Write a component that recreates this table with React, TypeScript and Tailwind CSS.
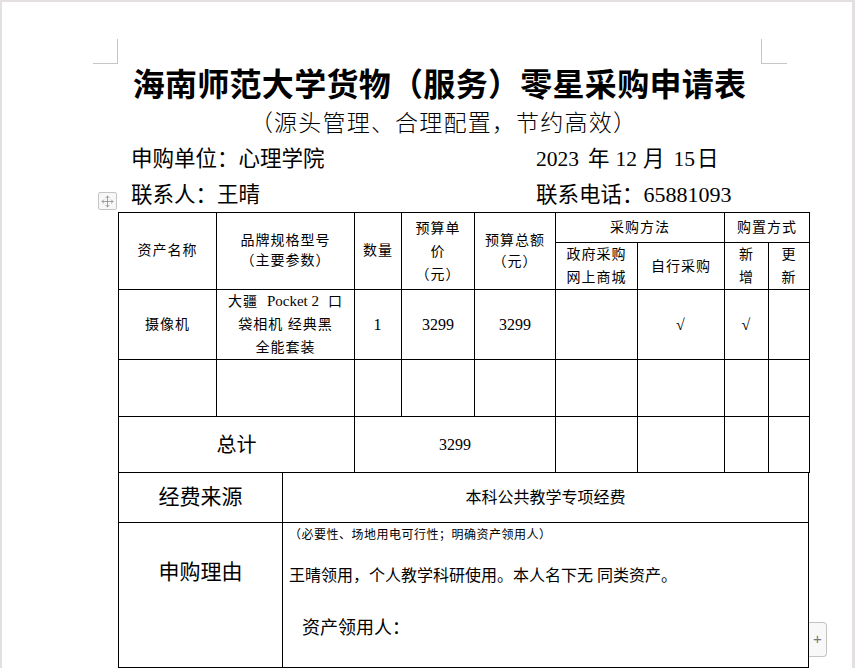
import React from 'react';
import { Move } from 'lucide-react';

const cell = 'border border-black p-0 text-center align-middle';

function CornerMarks() {
  return (
    <div className="flex justify-between pl-[91px] pr-[65px] pt-[37px]">
      <div className="h-[25px] w-[25px] border-b border-r border-[#c6c6c6]" />
      <div className="h-[25px] w-[26px] border-b border-l border-[#c6c6c6]" />
    </div>
  );
}

function PurchaseTable() {
  return (
    <table className="w-[691px] table-fixed border-collapse text-[14px] tracking-[1px]">
      <colgroup>
        <col className="w-[98px]" />
        <col className="w-[138px]" />
        <col className="w-[47px]" />
        <col className="w-[73px]" />
        <col className="w-[81px]" />
        <col className="w-[82px]" />
        <col className="w-[87px]" />
        <col className="w-[44px]" />
        <col className="w-[41px]" />
      </colgroup>
      <tbody>
        <tr className="h-[30px] leading-[20px]">
          <td rowSpan={2} className={cell}>资产名称</td>
          <td rowSpan={2} className={cell}>
            品牌规格型号
            <br />
            （主要参数）
          </td>
          <td rowSpan={2} className={cell}>数量</td>
          <td rowSpan={2} className={`${cell} leading-[23px]`}>
            预算单
            <br />
            价
            <br />
            （元）
          </td>
          <td rowSpan={2} className={`${cell} leading-[21px]`}>
            预算总额
            <br />
            （元）
          </td>
          <td colSpan={2} className={cell}>采购方法</td>
          <td colSpan={2} className={cell}>购置方式</td>
        </tr>
        <tr className="h-[46px] leading-[23px]">
          <td className={cell}>
            政府采购
            <br />
            网上商城
          </td>
          <td className={cell}>自行采购</td>
          <td className={cell}>
            新
            <br />
            增
          </td>
          <td className={cell}>
            更
            <br />
            新
          </td>
        </tr>
        <tr className="h-[70px] leading-[23px]">
          <td className={cell}>摄像机</td>
          <td className={cell}>
            大疆<span className="ml-[9px] text-[15px] tracking-normal">Pocket 2</span>
            <span className="ml-[9px]">口</span>
            <br />
            袋相机 经典黑
            <br />
            全能套装
          </td>
          <td className={`${cell} text-[16px]`}>1</td>
          <td className={`${cell} text-[16px] tracking-normal`}>3299</td>
          <td className={`${cell} text-[16px] tracking-normal`}>3299</td>
          <td className={cell} />
          <td className={`${cell} text-[16px]`}>√</td>
          <td className={`${cell} text-[16px]`}>√</td>
          <td className={cell} />
        </tr>
        <tr className="h-[57px]">
          <td className={cell} />
          <td className={cell} />
          <td className={cell} />
          <td className={cell} />
          <td className={cell} />
          <td className={cell} />
          <td className={cell} />
          <td className={cell} />
          <td className={cell} />
        </tr>
        <tr className="h-[56px]">
          <td colSpan={2} className={`${cell} text-[20px] tracking-normal`}>总计</td>
          <td colSpan={3} className={`${cell} text-[16px] tracking-normal`}>3299</td>
          <td className={cell} />
          <td className={cell} />
          <td className={cell} />
          <td className={cell} />
        </tr>
      </tbody>
    </table>
  );
}

function LowerRows() {
  return (
    <div className="w-[691px] border-x border-black">
      <div className="flex h-[50px] border-b border-black">
        <div className="flex w-[164px] items-center justify-center border-r border-black text-[21px]">
          经费来源
        </div>
        <div className="flex flex-1 items-center justify-center text-[16px]">本科公共教学专项经费</div>
      </div>
      <div className="flex h-[145px] border-b border-black">
        <div className="w-[164px] border-r border-black pt-[34px] text-center text-[21px] leading-[30px]">
          申购理由
        </div>
        <div className="flex-1 pl-[6px] pt-[4px]">
          <div className="text-[12px] leading-[16px] tracking-[0.5px]">（必要性、场地用电可行性；明确资产领用人）</div>
          <div className="mt-[22px] text-[16px] leading-[22px]">王晴领用，个人教学科研使用。本人名下无 同类资产。</div>
          <div className="mt-[29px] pl-[13px] text-[18px] leading-[24px]">资产领用人：</div>
        </div>
      </div>
      <div className="flex h-[30px]">
        <div className="w-[164px] border-r border-black" />
        <div className="flex-1" />
      </div>
    </div>
  );
}

export default function App() {
  return (
    <div className="h-[668px] w-[855px] overflow-hidden bg-[#e4e0e0] pl-[2px] pt-[2px] font-['Liberation_Serif','Noto_Sans_CJK_SC',serif] text-black">
      <div className="relative min-h-[700px] w-[850px] bg-white">
        <CornerMarks />

        <div className="pl-[116px] pr-[91px]">
          <div className="text-center font-['Noto_Sans_CJK_SC',sans-serif] text-[32px] font-bold leading-[36px] tracking-[0.3px]">
            海南师范大学货物（服务）零星采购申请表
          </div>
          <div className="mt-[7px] pl-[8px] text-center font-['Noto_Sans_CJK_SC',sans-serif] text-[23px] font-light leading-[28px] tracking-[1.2px]">
            （源头管理、合理配置，节约高效）
          </div>

          <div className="mt-[9px] grid grid-cols-[418px_1fr] text-[21.5px] leading-[30px]">
            <div className="pl-[13px]">申购单位：心理学院</div>
            <div>
              <span>2023</span>
              <span className="ml-[9px]">年</span>
              <span className="ml-[6px]">12</span>
              <span className="ml-[6px]">月</span>
              <span className="ml-[9px]">15</span>
              <span className="ml-[2px]">日</span>
            </div>
          </div>
          <div className="mt-[6px] grid grid-cols-[418px_1fr] text-[21.5px] leading-[30px]">
            <div className="pl-[13px]">联系人：王晴</div>
            <div>
              联系电话：<span className="text-[22px]">65881093</span>
            </div>
          </div>

          <div className="relative mt-[2px] w-[691px]">
            <div className="absolute left-[-20px] top-[-20px] flex h-[18px] w-[19px] items-center justify-center rounded-[2px] border border-[#c4c4c4] bg-[#f7f7f7] text-[#8a8a8a]">
              <Move size={13} strokeWidth={1.5} />
            </div>
            <PurchaseTable />
            <LowerRows />
            <div className="absolute left-[691px] top-[410px] flex h-[35px] w-[18px] items-center justify-center rounded-r-[4px] border border-l-0 border-[#c4c4c4] bg-[#f8f8f8] font-['Liberation_Sans',sans-serif] text-[15px] text-[#777]">
              +
            </div>
          </div>
        </div>
      </div>
    </div>
  );
}
